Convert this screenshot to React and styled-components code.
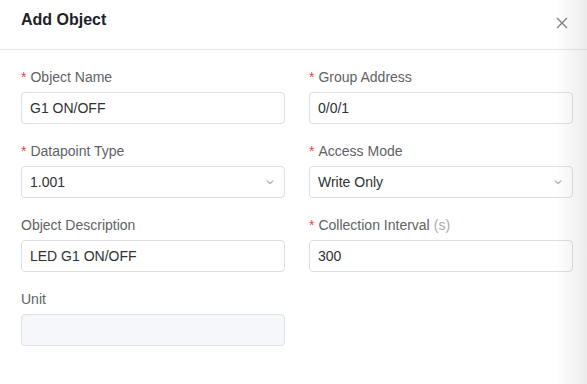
import React from 'react';
import styled, { createGlobalStyle } from 'styled-components';

const GlobalStyle = createGlobalStyle`
  html, body {
    margin: 0;
    padding: 0;
    background: #fff;
  }
  body {
    font-family: "Liberation Sans", Arial, sans-serif;
  }
`;

const Dialog = styled.div`
  position: relative;
  width: 587px;
  height: 384px;
  background: #fff;
  overflow: hidden;
`;

const EdgeShade = styled.div`
  position: absolute;
  top: 0;
  right: 0;
  width: 32px;
  height: 100%;
  background: linear-gradient(to right, rgba(0, 0, 0, 0), rgba(0, 0, 0, 0.075));
  pointer-events: none;
`;

const Header = styled.div`
  display: flex;
  align-items: center;
  justify-content: space-between;
  height: 40px;
  padding: 0 17px 9px 21px;
  border-bottom: 1px solid #e4e7ed;
`;

const Title = styled.h2`
  margin: 0;
  font-size: 16px;
  font-weight: 700;
  color: #1d2129;
`;

const CloseButton = styled.button`
  display: flex;
  align-items: center;
  justify-content: center;
  width: 16px;
  height: 16px;
  padding: 0;
  margin-top: 5px;
  border: none;
  background: none;
  color: #7d8590;
  cursor: pointer;
`;

const Body = styled.div`
  display: grid;
  grid-template-columns: 264px 264px;
  column-gap: 24px;
  row-gap: 16px;
  padding: 16px 0 0 21px;
`;

const Field = styled.div`
  display: flex;
  flex-direction: column;
  gap: 4px;
`;

const Label = styled.label`
  display: flex;
  align-items: center;
  height: 22px;
  font-size: 14px;
  color: #606266;
`;

const Star = styled.span`
  color: #f53f3f;
  margin-right: 4px;
  font-size: 14px;
`;

const Hint = styled.span`
  color: #a8abb2;
  margin-left: 4px;
`;

const InputBox = styled.div`
  display: flex;
  align-items: center;
  justify-content: space-between;
  box-sizing: border-box;
  height: 32px;
  padding: 0 9px 0 8px;
  border: 1px solid #dcdfe6;
  border-radius: 4px;
  background: ${(p) => (p.disabled ? '#f5f7fa' : '#fff')};
  font-size: 14px;
  color: #303133;
`;

const Chevron = () => (
  <svg width="10" height="10" viewBox="0 0 10 10" fill="none">
    <path d="M2 3.8 L5 6.5 L8 3.8" stroke="#a8abb2" strokeWidth="1.1" strokeLinecap="round" strokeLinejoin="round" />
  </svg>
);

function FormField({ label, required, hint, value, select, disabled }) {
  return (
    <Field>
      <Label>
        {required && <Star>*</Star>}
        {label}
        {hint && <Hint>{hint}</Hint>}
      </Label>
      <InputBox disabled={disabled}>
        <span>{value}</span>
        {select && <Chevron />}
      </InputBox>
    </Field>
  );
}

export default function App() {
  return (
    <Dialog>
      <GlobalStyle />
      <Header>
        <Title>Add Object</Title>
        <CloseButton aria-label="close">
          <svg width="12" height="12" viewBox="0 0 12 12">
            <path d="M1 1 L11 11 M11 1 L1 11" stroke="currentColor" strokeWidth="1.4" />
          </svg>
        </CloseButton>
      </Header>
      <Body>
        <FormField required label="Object Name" value="G1 ON/OFF" />
        <FormField required label="Group Address" value="0/0/1" />
        <FormField required label="Datapoint Type" value="1.001" select />
        <FormField required label="Access Mode" value="Write Only" select />
        <FormField label="Object Description" value="LED G1 ON/OFF" />
        <FormField required label="Collection Interval" hint="(s)" value="300" />
        <FormField label="Unit" value="" disabled />
      </Body>
      <EdgeShade />
    </Dialog>
  );
}
